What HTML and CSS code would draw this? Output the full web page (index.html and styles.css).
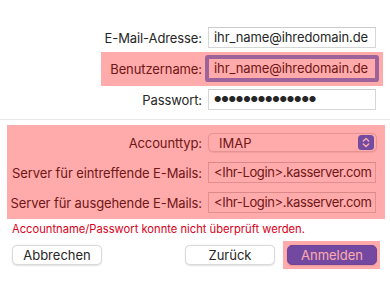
FILE: index.html
```html
<!DOCTYPE html>
<html lang="de">
<head>
<meta charset="utf-8">
<link rel="stylesheet" href="styles.css">
</head>
<body>
<div class="sheet">
  <section class="group top">
    <div class="row">
      <label class="lbl">E-Mail-Adresse:</label>
      <div class="field">ihr_name@ihredomain.de</div>
    </div>
    <div class="row hl hl-user">
      <label class="lbl">Benutzername:</label>
      <div class="field focus">ihr_name@ihredomain.de</div>
    </div>
    <div class="row">
      <label class="lbl">Passwort:</label>
      <div class="field pw">●●●●●●●●●●●●●●</div>
    </div>
  </section>
  <hr class="sep">
  <section class="group bottom hl hl-server">
    <div class="row">
      <label class="lbl">Accounttyp:</label>
      <div class="popup">
        <span>IMAP</span>
        <span class="stepper">
          <svg width="16" height="15" viewBox="0 0 16 15">
            <rect x="0" y="0" width="16" height="15" rx="3.5" fill="#2f72f2"/>
            <path d="M5.3 6 L8 3.6 L10.7 6" fill="none" stroke="#fff" stroke-width="1.4" stroke-linecap="round" stroke-linejoin="round"/>
            <path d="M5.3 9 L8 11.4 L10.7 9" fill="none" stroke="#fff" stroke-width="1.4" stroke-linecap="round" stroke-linejoin="round"/>
          </svg>
        </span>
      </div>
    </div>
    <div class="row">
      <label class="lbl">Server für eintreffende E-Mails:</label>
      <div class="field server">&lt;Ihr-Login&gt;.kasserver.com</div>
    </div>
    <div class="row">
      <label class="lbl">Server für ausgehende E-Mails:</label>
      <div class="field server">&lt;Ihr-Login&gt;.kasserver.com</div>
    </div>
  </section>
  <p class="error">Accountname/Passwort konnte nicht überprüft werden.</p>
  <div class="buttons">
    <button class="btn">Abbrechen</button>
    <div class="right">
      <button class="btn">Zurück</button>
      <button class="btn primary hl hl-btn">Anmelden</button>
    </div>
  </div>
</div>
</body>
</html>
```
FILE: styles.css
```css
* { box-sizing: border-box; }
html, body { margin: 0; padding: 0; background: #ffffff; }
body {
  font-family: Inter, "Noto Sans", "Liberation Sans", sans-serif;
  color: #262626;
  font-size: 13px;
  width: 390px;
  height: 282px;
  overflow: hidden;
}
.sheet { display: flex; flex-direction: column; }
.group { display: flex; flex-direction: column; }
.top { padding-top: 27px; gap: 10px; }
.bottom { gap: 9px; margin-top: 12px; }
.row { display: flex; align-items: center; height: 21px; position: relative; }
.lbl {
  width: 208px;
  padding-right: 6px;
  text-align: right;
  white-space: nowrap;
  letter-spacing: -0.1px;
}
.field {
  width: 168px;
  height: 21px;
  border: 1px solid #d6d6d6;
  border-top-color: #cbcbcb;
  background: #fff;
  padding: 0 5px;
  line-height: 19px;
  white-space: nowrap;
  overflow: hidden;
  letter-spacing: -0.1px;
}
.field.server { letter-spacing: -0.35px; padding-left: 5px; }
.field.focus {
  box-shadow: 0 0 0 3px #6f93e6;
  border-color: #6f93e6;
  border-radius: 1px;
}
.field.pw { font-size: 8.2px; letter-spacing: -0.2px; padding-left: 5px; }
.popup {
  width: 169px;
  height: 19px;
  border: 1px solid #dcdcdc;
  border-radius: 5px;
  background: #fff;
  display: flex;
  align-items: center;
  justify-content: space-between;
  padding: 0 2px 0 10px;
  box-shadow: 0 0.5px 1px rgba(0,0,0,0.08);
}
.stepper { display: flex; }
.sep {
  margin: 9px 0 0 0;
  border: 0;
  border-top: 1px solid #e6e6e6;
  height: 0;
}
.error {
  margin: 9px 0 0 12px;
  color: #d8001a;
  font-size: 11.2px;
  line-height: 14px;
}
.buttons {
  display: flex;
  justify-content: space-between;
  padding: 0 13px 0 12px;
  margin-top: 9px;
}
.right { display: flex; gap: 12px; }
.btn {
  width: 90px;
  height: 20px;
  font-family: inherit;
  font-size: 13px;
  color: #262626;
  background: #fff;
  border: 1px solid #dadada;
  border-radius: 5px;
  box-shadow: 0 0.5px 1.5px rgba(0,0,0,0.12);
  padding: 0;
  line-height: 18px;
}
.btn.primary {
  background: #2f6cf0;
  border-color: #2a63e6;
  color: #fff;
  position: relative;
}
.hl { position: relative; }
.hl::after {
  content: "";
  position: absolute;
  background: rgba(255, 0, 0, 0.33);
  pointer-events: none;
}
.hl-user::after { left: 101px; right: 7px; top: -6px; bottom: -7px; }
.hl-server::after { left: 7px; right: 5px; top: -7px; bottom: -6px; }
.hl-btn::after { left: -5px; right: -4px; top: -5px; bottom: -5px; }
```
